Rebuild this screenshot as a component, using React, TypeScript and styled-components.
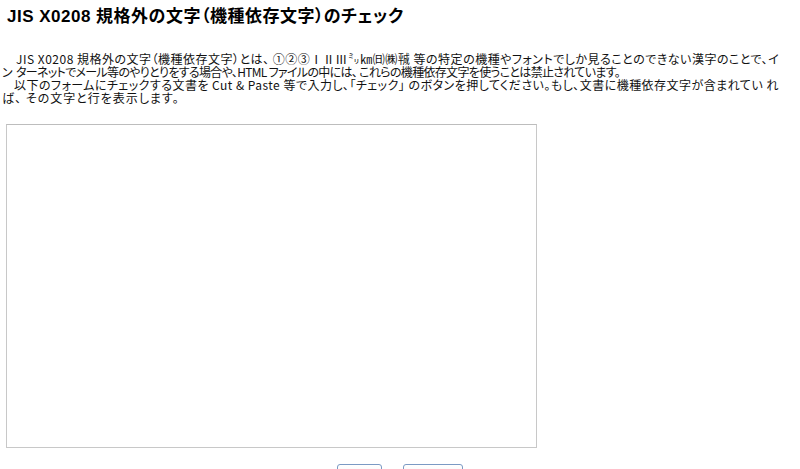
import styled, { createGlobalStyle } from "styled-components";

const Global = createGlobalStyle`
  html, body {
    margin: 0;
    padding: 0;
    background: #ffffff;
  }
  body {
    font-family: "Liberation Sans", "Noto Sans CJK JP", sans-serif;
    color: #000;
  }
`;

const Page = styled.div`
  width: 800px;
`;

const Title = styled.h1`
  margin: 0;
  padding: 6px 0 0 7px;
  font-size: 17px;
  line-height: 22px;
  font-weight: bold;
  font-feature-settings: "palt";
  letter-spacing: 0.5px;
`;

const Intro = styled.div`
  margin: 24px 0 0 0;
  padding: 0 6px 0 2px;
  font-family: "Noto Sans CJK JP", sans-serif;
  font-feature-settings: "palt";
  font-size: 12px;
  line-height: 13px;
  color: #111;
`;

const Line = styled.div<{ $indent?: number; $spacing: number }>`
  padding-left: ${(p) => p.$indent ?? 0}px;
  letter-spacing: ${(p) => p.$spacing}px;
  white-space: nowrap;
`;

const Form = styled.form`
  margin-top: 20px;
  display: flex;
  flex-direction: column;
`;

const TextArea = styled.textarea`
  margin-left: 6px;
  width: 531px;
  height: 324px;
  box-sizing: border-box;
  border: 1px solid #c8c8c8;
  border-top-color: #bdbdbd;
  resize: none;
  outline: none;
`;

const ButtonRow = styled.div`
  margin-top: 16px;
  display: flex;
  justify-content: center;
  gap: 21px;
`;

const Btn = styled.button<{ $w: number }>`
  width: ${(p) => p.$w}px;
  height: 24px;
  box-sizing: border-box;
  border: 1px solid #7b9ac4;
  border-radius: 3px;
  background: linear-gradient(#ffffff, #ececec);
  font-family: "Noto Sans CJK JP", sans-serif;
  font-size: 12px;
`;

export default function App() {
  return (
    <Page>
      <Global />
      <Title>JIS X0208 規格外の文字（機種依存文字）のチェック</Title>
      <Intro>
        <Line $indent={14} $spacing={0.5}>
          JIS X0208 規格外の文字（機種依存文字）とは、 ①②③ⅠⅡⅢ㍉㎞㈰㈱㍻ 等の特定の機種やフォントでしか見ることのできない漢字のことで、イ
        </Line>
        <Line $spacing={-0.68}>
          ン&nbsp; ターネットでメール等のやりとりをする場合や、HTML ファイルの中には、 これらの機種依存文字を使うことは禁止されています。
        </Line>
        <Line $indent={12} $spacing={0.47}>
          以下のフォームにチェックする文書を Cut &amp; Paste 等で入力し、「チェック」 のボタンを押してください。もし、文書に機種依存文字が含まれてい れ
        </Line>
        <Line $spacing={1}>ば、 その文字と行を表示します。</Line>
      </Intro>
      <Form onSubmit={(e) => e.preventDefault()}>
        <TextArea />
        <ButtonRow>
          <Btn $w={45}>検査</Btn>
          <Btn $w={60}>クリア</Btn>
        </ButtonRow>
      </Form>
    </Page>
  );
}
